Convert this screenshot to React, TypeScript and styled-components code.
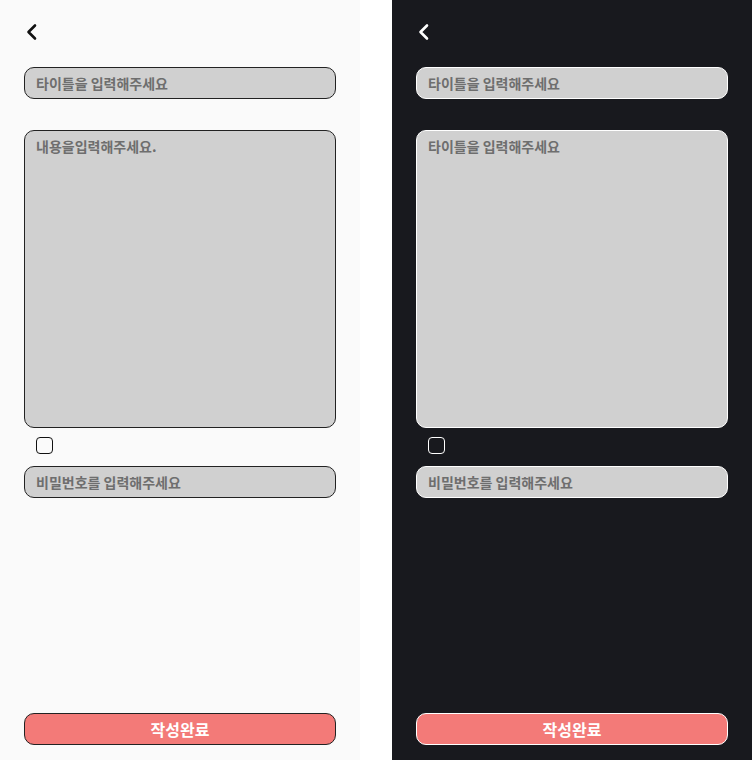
import React from "react";
import styled, { createGlobalStyle } from "styled-components";

const GlobalStyle = createGlobalStyle`
  html, body {
    margin: 0;
    padding: 0;
    background: #ffffff;
  }
  * {
    box-sizing: border-box;
  }
`;

const Page = styled.div`
  display: flex;
  gap: 32px;
  width: 752px;
  height: 760px;
  background: #ffffff;
`;

const Screen = styled.div<{ $dark?: boolean }>`
  width: 360px;
  height: 760px;
  padding: 0 24px 15px;
  display: flex;
  flex-direction: column;
  background: ${(p) => (p.$dark ? "#18191e" : "#fafafa")};
  font-family: "Noto Sans CJK KR", "Noto Sans", sans-serif;
`;

const Header = styled.div`
  height: 67px;
  padding-top: 23px;
  padding-left: 1px;
`;

const BackButton = styled.button<{ $dark?: boolean }>`
  border: none;
  background: none;
  padding: 0;
  display: block;
  cursor: pointer;
  color: ${(p) => (p.$dark ? "#ffffff" : "#111111")};
`;

const Field = styled.input<{ $dark?: boolean }>`
  width: 100%;
  height: 32px;
  padding: 0 11px;
  border: 1px solid ${(p) => (p.$dark ? "#ffffff" : "#222222")};
  border-radius: 10px;
  background: #d0d0d0;
  font-family: inherit;
  font-size: 14px;
  font-weight: 700;
  color: #444;
  outline: none;

  &::placeholder {
    color: #6e6e6e;
  }
`;

const Content = styled.textarea<{ $dark?: boolean }>`
  width: 100%;
  height: 298px;
  margin-top: 31px;
  padding: 5px 11px;
  border: 1px solid ${(p) => (p.$dark ? "#ffffff" : "#222222")};
  border-radius: 10px;
  background: #d0d0d0;
  font-family: inherit;
  font-size: 14px;
  font-weight: 700;
  line-height: 20px;
  color: #444;
  resize: none;
  outline: none;

  &::placeholder {
    color: #6e6e6e;
  }
`;

const CheckRow = styled.div`
  padding: 9px 0 12px 12px;
  display: flex;
`;

const Check = styled.span<{ $dark?: boolean }>`
  width: 17px;
  height: 17px;
  border: 1px solid ${(p) => (p.$dark ? "#ffffff" : "#111111")};
  border-radius: 4px;
`;

const Spacer = styled.div`
  flex: 1;
`;

const Submit = styled.button<{ $dark?: boolean }>`
  width: 100%;
  height: 32px;
  border: 1px solid ${(p) => (p.$dark ? "#ffffff" : "#222222")};
  border-radius: 10px;
  background: #f37a78;
  color: #ffffff;
  font-family: inherit;
  font-size: 16px;
  font-weight: 700;
  padding: 0;
  cursor: pointer;
`;

const ChevronLeft = () => (
  <svg width="12" height="18" viewBox="0 0 12 18" fill="none">
    <path
      d="M10 2.5 L3.5 9 L10 15.5"
      stroke="currentColor"
      strokeWidth="2.6"
      strokeLinecap="round"
      strokeLinejoin="round"
    />
  </svg>
);

const WriteForm = ({ dark, contentPlaceholder }: { dark?: boolean; contentPlaceholder: string }) => (
  <Screen $dark={dark}>
    <Header>
      <BackButton $dark={dark} aria-label="뒤로가기">
        <ChevronLeft />
      </BackButton>
    </Header>
    <Field $dark={dark} placeholder="타이틀을 입력해주세요" />
    <Content $dark={dark} placeholder={contentPlaceholder} />
    <CheckRow>
      <Check $dark={dark} />
    </CheckRow>
    <Field $dark={dark} type="password" placeholder="비밀번호를 입력해주세요" />
    <Spacer />
    <Submit $dark={dark}>작성완료</Submit>
  </Screen>
);

const App = () => (
  <>
    <GlobalStyle />
    <Page>
      <WriteForm contentPlaceholder="내용을입력해주세요." />
      <WriteForm dark contentPlaceholder="타이틀을 입력해주세요" />
    </Page>
  </>
);

export default App;
